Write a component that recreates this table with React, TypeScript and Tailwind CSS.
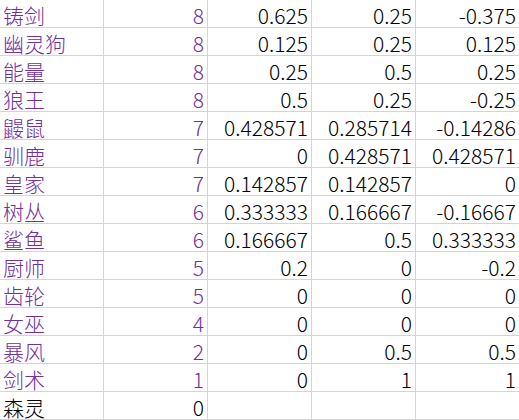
const rows: [string, string, string, string, string][] = [
  ["铸剑", "8", "0.625", "0.25", "-0.375"],
  ["幽灵狗", "8", "0.125", "0.25", "0.125"],
  ["能量", "8", "0.25", "0.5", "0.25"],
  ["狼王", "8", "0.5", "0.25", "-0.25"],
  ["鼹鼠", "7", "0.428571", "0.285714", "-0.14286"],
  ["驯鹿", "7", "0", "0.428571", "0.428571"],
  ["皇家", "7", "0.142857", "0.142857", "0"],
  ["树丛", "6", "0.333333", "0.166667", "-0.16667"],
  ["鲨鱼", "6", "0.166667", "0.5", "0.333333"],
  ["厨师", "5", "0.2", "0", "-0.2"],
  ["齿轮", "5", "0", "0", "0"],
  ["女巫", "4", "0", "0", "0"],
  ["暴风", "2", "0", "0.5", "0.5"],
  ["剑术", "1", "0", "1", "1"],
  ["森灵", "0", "", "", ""],
];

export default function App() {
  return (
    <div
      className="w-[519px] overflow-hidden bg-white text-[21px] leading-none font-light"
      style={{ fontFamily: '"Noto Sans CJK SC", "Noto Sans", sans-serif' }}
    >
      <div className="w-[520px]">
        {rows.map((r, i) => {
          const last = i === rows.length - 1;
          const accent = last ? "text-black" : "text-[#7030a0]";
          return (
            <div key={i} className="flex h-[28px] border-b border-[#d4d4d4]">
              <div className={`w-[104px] border-r border-[#d4d4d4] pl-[3px] flex items-end pb-[1px] ${accent}`}>
                {r[0]}
              </div>
              <div className={`w-[104px] border-r border-[#d4d4d4] pr-[3px] flex items-end justify-end pb-[1px] ${accent}`}>
                {r[1]}
              </div>
              {r.slice(2).map((v, j) => (
                <div
                  key={j}
                  className="w-[104px] border-r border-[#d4d4d4] pr-[3px] flex items-end justify-end pb-[1px] text-black"
                >
                  {v}
                </div>
              ))}
            </div>
          );
        })}
      </div>
    </div>
  );
}
